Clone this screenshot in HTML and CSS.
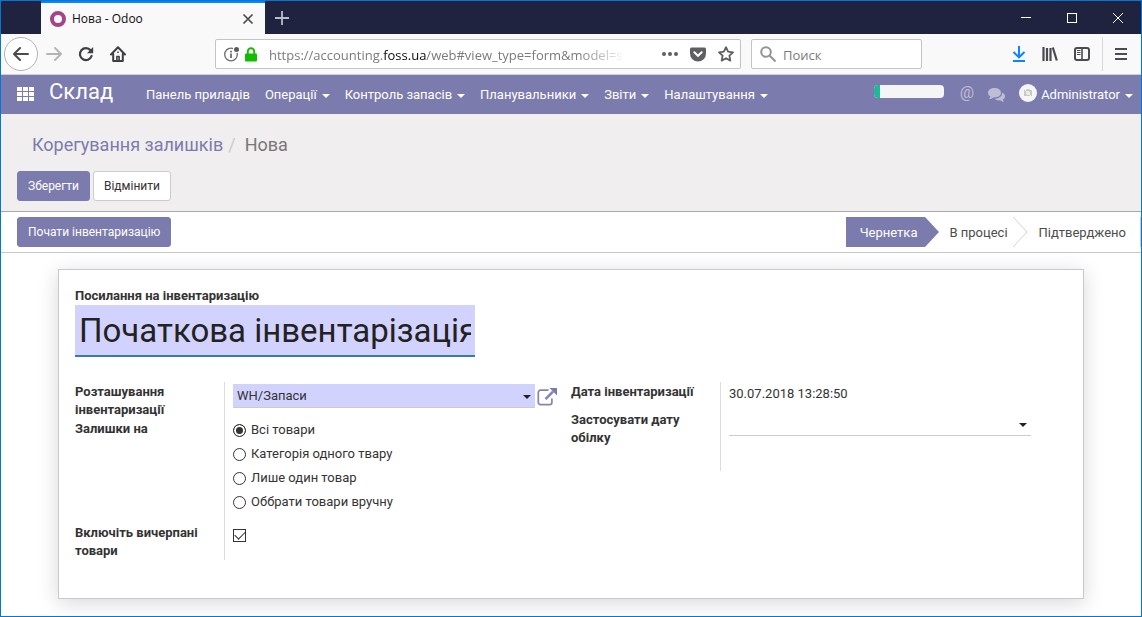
FILE: index.html
```html
<!DOCTYPE html>
<html lang="uk">
<head>
<meta charset="utf-8">
<title>Нова - Odoo</title>
<link rel="stylesheet" href="styles.css">
</head>
<body>
<div class="window">
  <header class="titlebar">
    <div class="tab">
      <span class="tab-logo"></span>
      <span class="tab-title">Нова - Odoo</span>
      <button class="icon-btn" aria-label="Закрити вкладку"><svg width="12" height="12" viewBox="0 0 12 12"><path d="M1.5 1.5l9 9M10.5 1.5l-9 9" stroke="#4a4a4f" stroke-width="1.7"/></svg></button>
    </div>
    <button class="icon-btn new-tab" aria-label="Нова вкладка"><svg width="14" height="14" viewBox="0 0 14 14"><path d="M7 0v14M0 7h14" stroke="#bcbcc8" stroke-width="1.8"/></svg></button>
    <div class="window-controls">
      <button class="icon-btn" aria-label="Згорнути"><svg width="10" height="10" viewBox="0 0 10 10"><path d="M0 4.500h10" stroke="#fff"/></svg></button>
      <button class="icon-btn" aria-label="Розгорнути"><svg width="10" height="10" viewBox="0 0 10 10"><rect x=".5" y=".5" width="9" height="9" fill="none" stroke="#fff"/></svg></button>
      <button class="icon-btn" aria-label="Закрити"><svg width="10" height="10" viewBox="0 0 10 10"><path d="M0 0l10 10M10 0L0 10" stroke="#fff"/></svg></button>
    </div>
  </header>

  <div class="toolbar">
    <div class="toolbar-nav">
      <button class="icon-btn back" aria-label="Назад"><svg width="16" height="16" viewBox="0 0 16 16" fill="none" stroke="#4a4a4f" stroke-width="2" stroke-linecap="round" stroke-linejoin="round"><path d="M15 8H1.500M7 2L1 8l6 6"/></svg></button>
      <button class="icon-btn" aria-label="Вперед"><svg width="16" height="16" viewBox="0 0 16 16" fill="none" stroke="#b4b4b6" stroke-width="1.800" stroke-linecap="round" stroke-linejoin="round"><path d="M1 8h13.500M9 2l6 6-6 6"/></svg></button>
      <button class="icon-btn" aria-label="Оновити"><svg width="16" height="16" viewBox="0 0 16 16"><path d="M12.600 4.300A6 6 0 1 0 13.600 10" fill="none" stroke="#3f3f43" stroke-width="2.200" stroke-linecap="round"/><path d="M15.200 1v6.200H9z" fill="#3f3f43"/></svg></button>
      <button class="icon-btn" aria-label="Додому"><svg width="16" height="16" viewBox="0 0 16 16" fill="none" stroke="#3f3f43" stroke-width="2" stroke-linejoin="round" stroke-linecap="round"><path d="M1 8.500L8 1.300l7 7.200M3.200 8v7h9.600V8"/><path d="M6.900 15v-4.500h2.200V15" stroke-width="1.600"/><path d="M8 6v.500" stroke-width="1.500"/></svg></button>
    </div>
    <div class="url-box">
      <svg width="17" height="16" viewBox="0 0 17 16"><circle cx="7" cy="8.500" r="6.300" fill="none" stroke="#6a6a6d" stroke-width="1.300"/><path d="M7 7.500V12M7 4.800v1.600" stroke="#5a5a5d" stroke-width="1.600"/><circle cx="12.500" cy="3.500" r="3.600" fill="#fff"/><circle cx="12.500" cy="3.500" r="2.500" fill="#5a5a5d"/></svg>
      <svg width="12" height="15" viewBox="0 0 12 15"><rect y="6.500" width="12" height="8" rx="1" fill="#12bc00"/><path d="M2.800 8V4.500a3.200 3.200 0 0 1 6.400 0V8" fill="none" stroke="#12bc00" stroke-width="1.900"/></svg>
      <div class="url-text" role="textbox" aria-label="Адреса">https://accounting.<span class="url-host">foss.ua</span>/web#view_type=form&amp;model=s</div>
      <svg width="16" height="6" viewBox="0 0 16 6" fill="#5f5f62"><circle cx="2" cy="3" r="2"/><circle cx="8" cy="3" r="2"/><circle cx="14" cy="3" r="2"/></svg>
      <svg width="16" height="15" viewBox="0 0 16 15"><path d="M1.500.500h13A1.500 1.500 0 0 1 16 2v4.500a8 8 0 0 1-16 0V2A1.500 1.500 0 0 1 1.500.500z" fill="#5f5f62"/><path d="M4.300 5.300L8 8.800l3.700-3.500" fill="none" stroke="#fff" stroke-width="2" stroke-linecap="round"/></svg>
      <svg width="16" height="16" viewBox="0 0 16 16"><path d="M8 1.200l2.100 4.500 4.900.6-3.600 3.400.9 4.900L8 12.200l-4.300 2.400.9-4.900L1 6.300l4.900-.6z" fill="none" stroke="#5f5f62" stroke-width="1.800" stroke-linejoin="round"/></svg>
    </div>
    <div class="search-box">
      <svg width="16" height="16" viewBox="0 0 16 16" fill="none" stroke="#939395" stroke-width="2"><circle cx="6" cy="6" r="4.800"/><path d="M9.500 9.500l6 6"/></svg>
      <input class="search-input" type="text" placeholder="Поиск" aria-label="Поиск">
    </div>
    <div class="toolbar-tools">
      <button class="icon-btn" aria-label="Завантаження"><svg width="14" height="16" viewBox="0 0 14 16" fill="none" stroke="#0a84ff" stroke-width="2"><path d="M7 0v11M1.500 6L7 11.300 12.500 6M1 15h12"/></svg></button>
      <button class="icon-btn" aria-label="Бібліотека"><svg width="16" height="14" viewBox="0 0 16 14" fill="none" stroke="#4a4a4f" stroke-width="2.200"><path d="M1.500 0v14M5 1v13M8.500 1v13M10.800.500l4 13"/></svg></button>
      <button class="icon-btn" aria-label="Бічна панель"><svg width="16" height="14" viewBox="0 0 16 14" fill="none" stroke="#4a4a4f"><rect x="1" y="1" width="14" height="12" rx="2" stroke-width="2"/><path d="M8 1v12" stroke-width="1.600"/><path d="M3 3.500h3.500M3 5.500h3.500M3 7.500h3.500"/></svg></button>
      <span class="tool-divider"></span>
      <button class="icon-btn" aria-label="Меню"><svg width="12" height="12" viewBox="0 0 12 12"><path d="M0 1h12M0 6h12M0 11h12" stroke="#4a4a4f" stroke-width="2"/></svg></button>
    </div>
  </div>

  <nav class="navbar">
    <button class="icon-btn apps" aria-label="Програми"><svg width="18" height="14" viewBox="0 0 18 14" fill="#fff"><rect width="5" height="4"/><rect x="6" width="5" height="4"/><rect x="12" width="5" height="4"/><rect y="5" width="5" height="4"/><rect x="6" y="5" width="5" height="4"/><rect x="12" y="5" width="5" height="4"/><rect y="10" width="5" height="4"/><rect x="6" y="10" width="5" height="4"/><rect x="12" y="10" width="5" height="4"/></svg></button>
    <a class="brand" href="#">Склад</a>
    <div class="menu">
      <a class="menu-link" href="#">Панель приладів</a>
      <a class="menu-link caret" href="#">Операції</a>
      <a class="menu-link caret" href="#">Контроль запасів</a>
      <a class="menu-link caret" href="#">Планувальники</a>
      <a class="menu-link caret" href="#">Звіти</a>
      <a class="menu-link caret" href="#">Налаштування</a>
    </div>
    <div class="systray">
      <div class="planner"><span class="planner-fill"></span></div>
      <a class="tray-at" href="#">@</a>
      <button class="icon-btn" aria-label="Розмови"><svg width="17" height="14" viewBox="0 0 17 14" fill="#bebdd6"><path d="M6.500 0C10 0 13 2 13 4.800s-3 4.700-6.500 4.700l-1.400-.1C4 10.400 2.500 11 1 11c.8-.8 1.300-1.500 1.400-2.400C.9 7.700 0 6.300 0 4.800 0 2 3 0 6.500 0z"/><path d="M14 4.500c1.800.8 3 2.200 3 3.700 0 1.400-.9 2.600-2.200 3.400.1.800.5 1.500 1.200 2.200-1.500 0-2.900-.6-3.900-1.500-2 .3-4.300-.2-5.600-1.500C10.500 10.700 14.500 8.500 14 4.500z"/></svg></button>
      <a class="user caret" href="#">
        <svg width="18" height="18" viewBox="0 0 18 18"><circle cx="9" cy="9" r="9" fill="#f5f5f5"/><path d="M5 6h2l.8-1h2.400L11 6h2v6H5z" fill="#c9c9c9"/><circle cx="9" cy="9" r="2" fill="#eee"/><path d="M5 5l8 8" stroke="#eee"/></svg>
        <span>Administrator</span>
      </a>
    </div>
  </nav>

  <section class="control-panel">
    <div class="breadcrumb"><a class="crumb-link" href="#">Корегування залишків</a><span class="crumb-sep">/</span><span>Нова</span></div>
    <div class="actions">
      <button class="btn btn-primary">Зберегти</button>
      <button class="btn btn-default">Відмінити</button>
    </div>
  </section>

  <section class="statusbar">
    <button class="btn btn-primary">Почати інвентаризацію</button>
    <div class="stages">
      <span class="stage stage-active">Чернетка</span>
      <svg width="14" height="30" viewBox="0 0 14 30"><path d="M0 0l14 15L0 30z" fill="#7c7bad"/></svg>
      <span class="stage">В процесі</span>
      <svg width="15" height="30" viewBox="0 0 15 30"><path d="M0 0l14 15L0 30" fill="none" stroke="#d4d4d8"/></svg>
      <span class="stage stage-last">Підтверджено</span>
    </div>
  </section>

  <main class="content">
    <form class="sheet">
      <label class="label" for="name">Посилання на інвентаризацію</label>
      <input class="name-input" id="name" type="text" value="Початкова інвентарізація">
      <div class="groups">
        <div class="group">
          <label class="label cell-label" for="location">Розташування інвентаризації</label>
          <div class="cell location">
            <div class="select-wrap required">
              <select class="select" id="location"><option>WH/Запаси</option></select>
            </div>
            <button class="icon-btn" type="button" aria-label="Відкрити"><svg width="20" height="18" viewBox="0 0 20 18" fill="none" stroke="#8584b5" stroke-width="2"><path d="M11.500 2.200H3.500A2.200 2.200 0 0 0 1.300 4.400v10a2.200 2.200 0 0 0 2.200 2.200h9.200a2.200 2.200 0 0 0 2.200-2.200V10.500" stroke-width="1.700"/><path d="M8.500 11.200L16 3.700" stroke-width="2.600"/><path d="M12.500 0H20v7.500z" fill="#7c7bad" stroke="none"/></svg></button>
          </div>
          <span class="label cell-label" id="filter">Залишки на</span>
          <div class="cell radios" role="radiogroup" aria-labelledby="filter">
            <label class="option"><input class="radio" type="radio" name="filter" checked>Всі товари</label>
            <label class="option"><input class="radio" type="radio" name="filter">Категорія одного твару</label>
            <label class="option"><input class="radio" type="radio" name="filter">Лише один товар</label>
            <label class="option"><input class="radio" type="radio" name="filter">Оббрати товари вручну</label>
          </div>
          <label class="label cell-label" for="exhausted">Включіть вичерпані товари</label>
          <div class="cell check-cell"><input class="check" id="exhausted" type="checkbox" checked></div>
        </div>
        <div class="group">
          <span class="label cell-label">Дата інвентаризації</span>
          <div class="cell date">30.07.2018 13:28:50</div>
          <label class="label cell-label tall" for="accounting-date">Застосувати дату обілку</label>
          <div class="cell">
            <div class="select-wrap">
              <select class="select" id="accounting-date"><option></option></select>
            </div>
          </div>
        </div>
      </div>
    </form>
  </main>
</div>
</body>
</html>
```
FILE: styles.css
```css
* { box-sizing: border-box; }

body {
  margin: 0;
  font: 13px/18px Roboto, "Noto Sans", sans-serif;
  color: #333;
  background: #fff;
}

.window {
  min-height: 100vh;
  display: flex;
  flex-direction: column;
  border: 1px solid #0078d7;
}

svg { display: block; flex: none; }
a { color: inherit; text-decoration: none; }

.icon-btn {
  flex: none;
  display: flex;
  align-items: center;
  justify-content: center;
  padding: 0;
  border: 0;
  background: none;
}

/* Browser chrome */
.titlebar {
  display: flex;
  height: 33px;
  padding-left: 40px;
  background: #202340;
}
.tab {
  display: flex;
  align-items: center;
  width: 224px;
  padding: 0 11px 0 9px;
  border-top: 2px solid #0a84ff;
  background: #f9f9fa;
  font: 12px/18px "Open Sans", "Noto Sans", sans-serif;
  color: #0c0c0d;
}
.tab-logo {
  width: 16px;
  height: 16px;
  border: 4px solid #a24689;
  border-radius: 50%;
}
.tab-title { flex: 1; margin-left: 6px; }
.new-tab { margin-left: 10px; }
.window-controls {
  display: flex;
  gap: 36px;
  margin-left: auto;
  padding-right: 18px;
}

.toolbar {
  display: flex;
  align-items: center;
  height: 41px;
  padding: 0 14px 0 3px;
  border-bottom: 1px solid #d0d0d2;
  background: #f9f9fa;
  font: 13px/18px "Open Sans", "Noto Sans", sans-serif;
}
.toolbar-nav { display: flex; align-items: center; gap: 16px; width: 211px; }
.toolbar-nav .back {
  width: 34px;
  height: 34px;
  margin-right: -8px;
  border: 1px solid #b5b5b7;
  border-radius: 50%;
  background: #fff;
}
.url-box, .search-box {
  display: flex;
  align-items: center;
  height: 30px;
  border: 1px solid #c4c4c6;
  border-radius: 2px;
  background: #fff;
}
.url-box { flex: 1; min-width: 0; gap: 12px; padding: 0 6px 0 8px; }
.url-box svg:first-child { margin-right: -8px; }
.url-text {
  flex: 1;
  min-width: 0;
  margin-right: 24px;
  padding-top: 1px;
  overflow: hidden;
  white-space: nowrap;
  color: #7b7b7d;
  mask-image: linear-gradient(to left, transparent, #000 48px);
}
.url-host { color: #0c0c0d; }
.search-box { width: 171px; margin-left: 10px; padding: 0 8px; gap: 7px; }
.search-input {
  flex: 1;
  min-width: 0;
  padding: 1px 0 0;
  border: 0;
  background: none;
  font: inherit;
}
.search-input::placeholder { color: #7b7b7d; }
.toolbar-tools { display: flex; align-items: center; gap: 16px; margin-left: 90px; }
.tool-divider { width: 1px; height: 34px; margin: 0 -4px; background: #d8d8da; }

/* Application navbar */
.navbar {
  display: flex;
  align-items: center;
  height: 39px;
  padding: 0 8px 0 16px;
  background: #7c7bad;
  color: #fff;
}
.apps { padding-bottom: 2px; }
.brand { width: 97px; margin-left: 14px; font-size: 22px; line-height: 30px; padding-bottom: 6px; }
.menu { display: flex; gap: 15px; }
.caret { display: flex; align-items: center; }
.caret::after {
  content: "";
  margin: 2px 0 0 5px;
  border: 4px solid transparent;
  border-top-color: currentColor;
  border-bottom: 0;
}
.systray { display: flex; align-items: center; margin-left: auto; }
.planner {
  width: 70px;
  height: 13px;
  margin: 0 16px 6px 0;
  overflow: hidden;
  border-radius: 4px;
  background: #f5f5f5;
}
.planner-fill { display: block; width: 6px; height: 13px; background: #21b799; }
.tray-at { margin-right: 14px; padding-bottom: 3px; font-size: 16px; color: #bebdd6; }
.user { margin-left: 14px; }
.user svg { margin-right: 4px; margin-bottom: 4px; }

/* Control panel */
.control-panel {
  padding: 18px 16px 10px;
  border-bottom: 1px solid #aaa;
  background: #f0eeee;
}
.breadcrumb { padding: 0 15px; font-size: 18px; line-height: 26px; color: #777; }
.crumb-link { color: #7c7bad; }
.crumb-sep { margin: 0 9px 0 5px; color: #ccc; }
.actions { display: flex; gap: 3px; margin-top: 13px; }
.btn {
  height: 30px;
  padding: 0 10px;
  border: 1px solid #7c7bad;
  border-radius: 3px;
  font: 12px/18px Roboto, "Noto Sans", sans-serif;
}
.btn-primary { background: #7c7bad; color: #fff; }
.btn-default { border-color: #ccc; background: #fff; color: #333; }

/* Status bar */
.statusbar {
  display: flex;
  align-items: center;
  justify-content: space-between;
  padding: 5px 0 5px 16px;
  border-bottom: 1px solid #c8c8c8;
}
.stages { display: flex; height: 30px; line-height: 32px; color: #4c4c4c; border-right: 1px solid #ccc; }
.stage { padding: 0 5px 0 10px; }
.stage-active { padding: 0 8px 0 14px; background: #7c7bad; color: #fff; }
.stage-last { padding: 0 14px 0 11px; }

/* Form */
.content { flex: 1; padding: 16px 57px; overflow: hidden; }
.sheet {
  min-height: 330px;
  padding: 17px 16px 38px;
  border: 1px solid #c8c8d3;
  background: #fff;
  box-shadow: 0 4px 20px rgba(0, 0, 0, 0.16);
}
.label { display: block; font-weight: 700; }
.name-input {
  display: block;
  width: 400px;
  max-width: 100%;
  height: 52px;
  padding: 1px 4px 0;
  border: 0;
  border-bottom: 2px solid #337ab7;
  background: #d2d2ff;
  font: 33px/48px Roboto, "Noto Sans", sans-serif;
  color: #222;
}
.groups { display: grid; grid-template-columns: 1fr 1fr; align-items: start; margin-top: 25px; }
.group { display: grid; grid-template-columns: 150px 1fr; }
.cell-label { padding: 1px 16px 0 0; border-right: 1px solid #ddd; }
.cell { padding: 2px 36px 0 8px; }
.location { display: flex; align-items: flex-start; gap: 2px; padding-right: 14px; }
.location .icon-btn { margin-top: 4px; }
.select-wrap { position: relative; flex: 1; }
.select-wrap::after {
  content: "";
  position: absolute;
  top: 11px;
  right: 4px;
  border: 4px solid transparent;
  border-top-color: #222;
  border-bottom: 0;
  pointer-events: none;
}
.select {
  display: block;
  width: 100%;
  height: 24px;
  padding: 0 4px;
  appearance: none;
  border: 0;
  border-bottom: 1px solid #ccc;
  border-radius: 0;
  background: transparent;
  font: inherit;
  color: #333;
}
.required .select { background: #d2d2ff; }
.radios { display: grid; gap: 2px; padding-top: 0; padding-bottom: 10px; }
.option { display: flex; align-items: center; gap: 5px; height: 22px; }
.radio, .check {
  flex: none;
  width: 13px;
  height: 13px;
  margin: 0;
  appearance: none;
  border: 1px solid #333;
  background: #fff;
}
.radio { border-radius: 50%; }
.radio:checked { background: #333; box-shadow: inset 0 0 0 2px #fff; }
.check-cell { padding-top: 6px; }
.check { display: grid; place-items: center; }
.check:checked::before {
  content: "";
  width: 9px;
  height: 5px;
  margin-bottom: 3px;
  border: solid #333;
  border-width: 0 0 1px 1px;
  rotate: -45deg;
}
.date { height: 28px; padding-top: 3px; }
.tall { padding-bottom: 24px; }
```
